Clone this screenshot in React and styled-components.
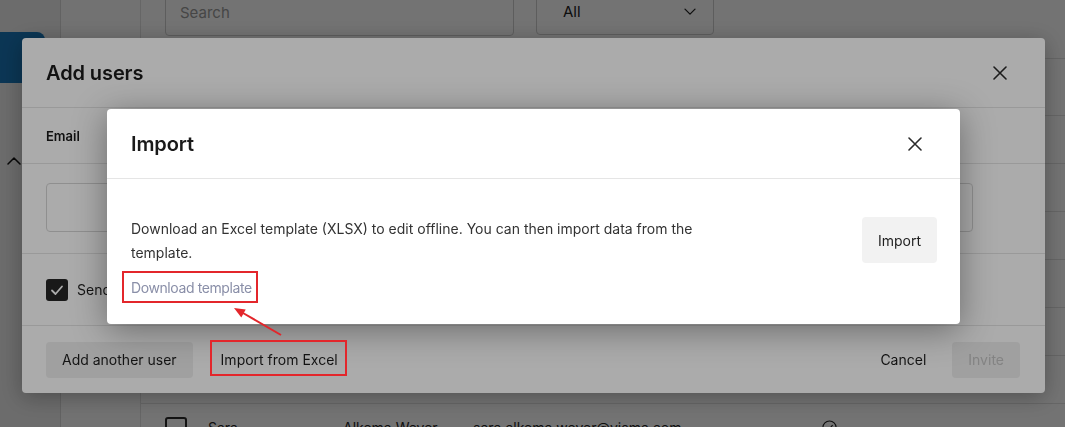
import React from "react";
import styled, { createGlobalStyle } from "styled-components";

const GlobalStyle = createGlobalStyle`
  html, body {
    margin: 0;
    padding: 0;
    width: 1065px;
    height: 427px;
    overflow: hidden;
    background: #fff;
  }
  body {
    font-family: Inter, "Noto Sans", "Liberation Sans", sans-serif;
    color: #1f1f1f;
    -webkit-font-smoothing: antialiased;
  }
  *, *::before, *::after { box-sizing: border-box; }
`;

/* ---------- page behind the dialogs ---------- */

const Shell = styled.div`
  display: flex;
  width: 1065px;
  height: 427px;
  overflow: hidden;
  background: #fff;
`;

const Rail = styled.aside`
  width: 61px;
  flex: none;
  background: #efefef;
  border-right: 1px solid #dadada;
  padding-top: 32px;
  display: flex;
  flex-direction: column;
`;

const RailActive = styled.div`
  width: 45px;
  height: 51px;
  flex: none;
  background: #1978bb;
  border-radius: 0 8px 8px 0;
`;

const RailToggle = styled.div`
  margin: 74px 0 0 7px;
  width: 14px;
  height: 8px;
  flex: none;
  display: flex;
  color: #111;
`;

const NavColumn = styled.nav`
  width: 80px;
  flex: none;
  background: #fcfcfc;
  border-right: 1px solid #e2e2e2;
`;

const Main = styled.main`
  flex: 1;
  display: flex;
  flex-direction: column;
  overflow: hidden;
  background: #fff;
`;

const Toolbar = styled.div`
  flex: none;
  margin-top: -12px;
  height: 71px;
  padding-left: 24px;
  display: flex;
  align-items: flex-start;
  gap: 22px;
  border-bottom: 1px solid #e2e2e2;
`;

const SearchField = styled.input`
  width: 349px;
  height: 48px;
  border: 1px solid #cfcfcf;
  border-radius: 4px;
  padding: 0 14px;
  font: 400 15px Inter, sans-serif;
  color: #222;
  background: #fff;
  &::placeholder { color: #9b9b9b; }
`;

const FilterSelect = styled.div`
  width: 178px;
  height: 47px;
  border: 1px solid #cfcfcf;
  border-radius: 4px;
  padding: 0 17px 0 26px;
  display: flex;
  align-items: center;
  justify-content: space-between;
  font-size: 15px;
  color: #222;
`;

const Table = styled.div`
  flex: none;
  display: flex;
  flex-direction: column;
`;

const TableRow = styled.div`
  flex: none;
  height: ${(p) => (p.$head ? 57 : 48)}px;
  display: grid;
  grid-template-columns: 43px 135px 130px 349px 1fr;
  align-items: center;
  padding-left: 24px;
  border-bottom: 1px solid #e2e2e2;
  font-size: 14px;
  font-weight: ${(p) => (p.$head ? 600 : 400)};
  color: #252525;
`;

const RowCheck = styled.span`
  width: 22px;
  height: 22px;
  border: 2px solid #2a2a2a;
  border-radius: 3px;
  display: block;
`;

const StatusIcon = styled.span`
  display: flex;
  color: #222;
`;

/* ---------- dialogs ---------- */

const Backdrop = styled.div`
  position: fixed;
  inset: 0;
  z-index: ${(p) => p.$layer};
  background: rgba(0, 0, 0, 0.33);
  display: flex;
  align-items: center;
  justify-content: center;
  padding: ${(p) => p.$shift};
`;

const Dialog = styled.section`
  width: ${(p) => p.$width}px;
  background: #fff;
  border-radius: 4px;
  box-shadow: ${(p) => p.$shadow};
  display: flex;
  flex-direction: column;
  overflow: hidden;
`;

const DialogHeader = styled.header`
  height: 70px;
  flex: none;
  padding: 0 29px 0 24px;
  display: flex;
  align-items: center;
  justify-content: space-between;
  border-bottom: 1px solid #e5e5e5;
`;

const DialogTitle = styled.h2`
  margin: 0;
  font-size: 20px;
  font-weight: 600;
  color: #1a1a1a;
  letter-spacing: -0.1px;
`;

const CloseButton = styled.button`
  width: 32px;
  height: 32px;
  border: 0;
  padding: 0;
  background: transparent;
  display: flex;
  align-items: center;
  justify-content: center;
  color: #2b2b2b;
`;

const FieldLabels = styled.div`
  height: 56px;
  padding: 0 72px 0 24px;
  display: grid;
  grid-template-columns: 1.6fr 1fr 1fr 1fr;
  gap: 16px;
  align-items: center;
  border-bottom: 1px solid #e5e5e5;
  font-size: 13px;
  font-weight: 600;
  color: #1a1a1a;
`;

const FieldRow = styled.div`
  padding: 19px 72px 21px 24px;
  display: grid;
  grid-template-columns: 1.6fr 1fr 1fr 1fr;
  gap: 16px;
  border-bottom: 1px solid #e5e5e5;
`;

const TextBox = styled.div`
  height: 49px;
  border: 1px solid #d6d6d6;
  border-radius: 4px;
  background: #fff;
  display: flex;
  align-items: center;
  justify-content: flex-end;
  padding: 0 12px;
  color: #333;
`;

const CheckRow = styled.div`
  height: 72px;
  padding: 0 24px;
  display: flex;
  align-items: center;
  gap: 9px;
  border-bottom: 1px solid #e5e5e5;
  font-size: 14px;
  color: #1f1f1f;
`;

const CheckBox = styled.span`
  width: 22px;
  height: 22px;
  border-radius: 3px;
  background: #262626;
  display: flex;
  align-items: center;
  justify-content: center;
  color: #fff;
`;

const Footer = styled.footer`
  height: 67px;
  padding: 0 25px 0 24px;
  display: flex;
  align-items: center;
  gap: 17px;
`;

const Spacer = styled.div`
  flex: 1;
`;

const Button = styled.button`
  height: 36px;
  padding: 0 ${(p) => (p.$tight ? 11 : 16)}px;
  border: 0;
  border-radius: 4px;
  font: 400 14px Inter, sans-serif;
  color: ${(p) => (p.$disabled ? "#c4c4c4" : "#1f1f1f")};
  background: ${(p) => (p.$filled ? "#efefef" : "transparent")};
  white-space: nowrap;
`;

const ButtonPair = styled.div`
  display: flex;
  align-items: center;
  gap: 10px;
`;

const ImportBody = styled.div`
  padding: 38px 23px 24px 24px;
  display: flex;
  align-items: flex-start;
  justify-content: space-between;
`;

const ImportText = styled.div`
  display: flex;
  flex-direction: column;
  align-items: flex-start;
`;

const Lead = styled.p`
  margin: 0;
  max-width: 600px;
  font-size: 14px;
  line-height: 24px;
  color: #333;
`;

const TemplateLink = styled.a`
  margin-top: 11px;
  font-size: 14px;
  line-height: 24px;
  letter-spacing: -0.4px;
  color: #8a8fa8;
  text-decoration: none;
`;

const ImportButton = styled.button`
  height: 46px;
  padding: 0 16px;
  border: 0;
  border-radius: 4px;
  background: #f2f2f2;
  font: 400 14px Inter, sans-serif;
  color: #1f1f1f;
`;

/* red markup drawn over the whole screen */
const Markup = styled.svg`
  position: fixed;
  inset: 0;
  z-index: 30;
  pointer-events: none;
`;

/* ---------- icons ---------- */

const CloseIcon = () => (
  <svg width="14" height="14" viewBox="0 0 14 14" fill="none">
    <path d="M1 1 L13 13 M13 1 L1 13" stroke="currentColor" strokeWidth="1.6" strokeLinecap="round" />
  </svg>
);

const ChevronDown = ({ size = 12 }) => (
  <svg width={size} height={size * 0.6} viewBox="0 0 12 7" fill="none">
    <path d="M1 1 L6 6 L11 1" stroke="currentColor" strokeWidth="1.3" strokeLinecap="round" strokeLinejoin="round" />
  </svg>
);

const ChevronUp = () => (
  <svg width="14" height="8" viewBox="0 0 14 8" fill="none">
    <path d="M1 7 L7 1 L13 7" stroke="currentColor" strokeWidth="1.5" strokeLinecap="round" strokeLinejoin="round" />
  </svg>
);

const Tick = () => (
  <svg width="16" height="16" viewBox="0 0 16 16" fill="none">
    <path d="M3 8.5 L6.5 12 L13 4.5" stroke="currentColor" strokeWidth="1.8" strokeLinecap="round" strokeLinejoin="round" />
  </svg>
);

const CircleCheck = () => (
  <svg width="15" height="15" viewBox="0 0 16 16" fill="none">
    <circle cx="8" cy="8" r="7" stroke="currentColor" strokeWidth="1.2" />
    <path d="M5 8.2 L7.2 10.4 L11 5.8" stroke="currentColor" strokeWidth="1.2" strokeLinecap="round" strokeLinejoin="round" />
  </svg>
);

const users = [
  ["Anna", "Berg", "anna.berg@visma.com"],
  ["Erik", "Lund", "erik.lund@visma.com"],
  ["Jonas", "Holm", "jonas.holm@visma.com"],
  ["Maria", "Nilsen", "maria.nilsen@visma.com"],
  ["Pieter", "de Vries", "pieter.devries@visma.com"],
  ["Lotte", "Jansen", "lotte.jansen@visma.com"],
  ["Sara", "Alkema Wever", "sara.alkema.wever@visma.com"],
];

export default function App() {
  return (
    <>
      <GlobalStyle />
      <Shell>
        <Rail>
          <RailActive />
          <RailToggle>
            <ChevronUp />
          </RailToggle>
        </Rail>
        <NavColumn />
        <Main>
          <Toolbar>
            <SearchField placeholder="Search" readOnly />
            <FilterSelect>
              <span>All</span>
              <ChevronDown />
            </FilterSelect>
          </Toolbar>
          <Table>
            <TableRow $head>
              <span />
              <span>First name</span>
              <span>Last name</span>
              <span>Email</span>
              <span>Active</span>
            </TableRow>
            {users.map(([first, last, mail]) => (
              <TableRow key={mail}>
                <RowCheck />
                <span>{first}</span>
                <span>{last}</span>
                <span>{mail}</span>
                <StatusIcon>
                  <CircleCheck />
                </StatusIcon>
              </TableRow>
            ))}
          </Table>
        </Main>
      </Shell>

      <Backdrop $layer={10} $shift="4px 0 0 2px">
        <Dialog $width={1023} $shadow="0 4px 22px rgba(0,0,0,0.3)">
          <DialogHeader>
            <DialogTitle>Add users</DialogTitle>
            <CloseButton aria-label="Close">
              <CloseIcon />
            </CloseButton>
          </DialogHeader>
          <FieldLabels>
            <span>Email</span>
            <span>First name</span>
            <span>Last name</span>
            <span>Role</span>
          </FieldLabels>
          <FieldRow>
            <TextBox />
            <TextBox />
            <TextBox />
            <TextBox>
              <ChevronDown />
            </TextBox>
          </FieldRow>
          <CheckRow>
            <CheckBox>
              <Tick />
            </CheckBox>
            <span>Send invitation email</span>
          </CheckRow>
          <Footer>
            <Button $filled>Add another user</Button>
            <Button $tight>Import from Excel</Button>
            <Spacer />
            <ButtonPair>
              <Button>Cancel</Button>
              <Button $filled $disabled>
                Invite
              </Button>
            </ButtonPair>
          </Footer>
        </Dialog>
      </Backdrop>

      <Backdrop $layer={20} $shift="6px 0 0 2px">
        <Dialog $width={853} $shadow="0 6px 34px rgba(0,0,0,0.38)">
          <DialogHeader>
            <DialogTitle>Import</DialogTitle>
            <CloseButton aria-label="Close">
              <CloseIcon />
            </CloseButton>
          </DialogHeader>
          <ImportBody>
            <ImportText>
              <Lead>
                Download an Excel template (XLSX) to edit offline. You can then import data from the template.
              </Lead>
              <TemplateLink href="#template">Download template</TemplateLink>
            </ImportText>
            <ImportButton>Import</ImportButton>
          </ImportBody>
        </Dialog>
      </Backdrop>

      <Markup width="1065" height="427" viewBox="0 0 1065 427">
        <rect x="123" y="272" width="134" height="30" fill="none" stroke="#e3262b" strokeWidth="2" />
        <rect x="211" y="341" width="135" height="34" fill="none" stroke="#e3262b" strokeWidth="2" />
        <line x1="281" y1="335" x2="243" y2="313" stroke="#e3262b" strokeWidth="2" />
        <polygon points="234,308 245.7,309.6 241.3,317.4" fill="#e3262b" />
      </Markup>
    </>
  );
}
